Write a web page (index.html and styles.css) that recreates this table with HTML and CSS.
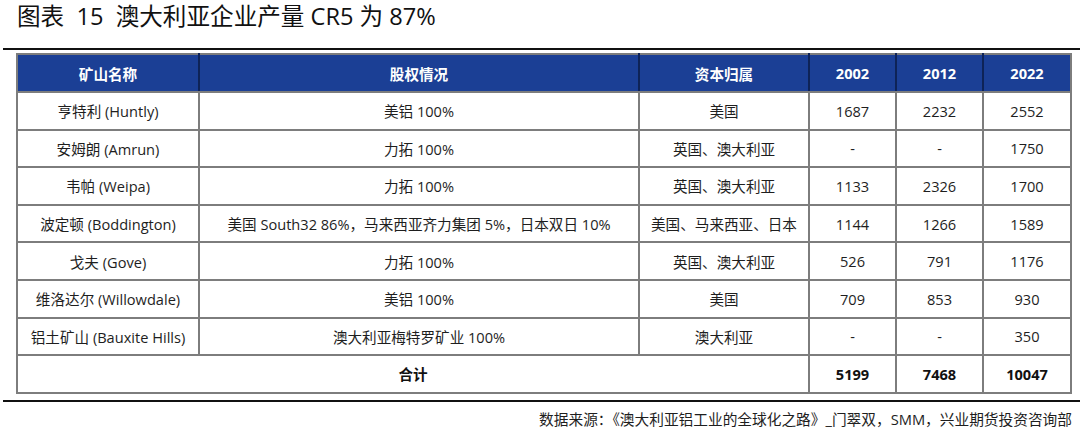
FILE: index.html
```html
<!DOCTYPE html>
<html lang="zh">
<head>
<meta charset="utf-8">
<link rel="stylesheet" href="styles.css">
</head>
<body>
<div class="page">
  <h1 class="title">图表&nbsp; 15&nbsp; 澳大利亚企业产量 CR5 为 87%</h1>
  <div class="rule rule-top"></div>
  <div class="table-wrap">
    <table class="data">
      <colgroup>
        <col class="c1"><col class="c2"><col class="c3"><col class="c4"><col class="c5"><col class="c6">
      </colgroup>
      <thead>
        <tr><th>矿山名称</th><th>股权情况</th><th>资本归属</th><th>2002</th><th>2012</th><th>2022</th></tr>
      </thead>
      <tbody>
        <tr><td>亨特利 (Huntly)</td><td>美铝 100%</td><td>美国</td><td>1687</td><td>2232</td><td>2552</td></tr>
        <tr><td>安姆朗 (Amrun)</td><td>力拓 100%</td><td>英国、澳大利亚</td><td>-</td><td>-</td><td>1750</td></tr>
        <tr><td>韦帕 (Weipa)</td><td>力拓 100%</td><td>英国、澳大利亚</td><td>1133</td><td>2326</td><td>1700</td></tr>
        <tr><td>波定顿 (Boddington)</td><td>美国 South32 86%，马来西亚齐力集团 5%，日本双日 10%</td><td>美国、马来西亚、日本</td><td>1144</td><td>1266</td><td>1589</td></tr>
        <tr><td>戈夫 (Gove)</td><td>力拓 100%</td><td>英国、澳大利亚</td><td>526</td><td>791</td><td>1176</td></tr>
        <tr><td>维洛达尔 (Willowdale)</td><td>美铝 100%</td><td>美国</td><td>709</td><td>853</td><td>930</td></tr>
        <tr><td>铝土矿山 (Bauxite Hills)</td><td>澳大利亚梅特罗矿业 100%</td><td>澳大利亚</td><td>-</td><td>-</td><td>350</td></tr>
        <tr class="total"><td colspan="3">合计</td><td>5199</td><td>7468</td><td>10047</td></tr>
      </tbody>
    </table>
  </div>
  <div class="rule rule-bottom"></div>
  <p class="source">数据来源：《澳大利亚铝工业的全球化之路》_门翠双，SMM，兴业期货投资咨询部</p>
</div>
</body>
</html>
```

FILE: styles.css
```css
html, body {
  margin: 0;
  padding: 0;
  background: #ffffff;
}
body {
  font-family: "Open Sans", "Noto Sans CJK SC", sans-serif;
  color: #1e1e1e;
}
.page {
  width: 1080px;
  height: 439px;
  display: flex;
  flex-direction: column;
}
.title {
  margin: 0;
  padding: 1px 0 0 17px;
  height: 43px;
  box-sizing: border-box;
  font-family: "Open Sans", "Noto Sans CJK SC", sans-serif;
  font-weight: 400;
  font-size: 23.6px;
  line-height: 30px;
  color: #111;
}
.rule {
  height: 2px;
  background: #111;
  margin-left: 3px;
}
.rule-top {
  margin-top: 5px;
}
.table-wrap {
  padding: 3px 0 0 16px;
}
.data {
  border-collapse: collapse;
  table-layout: fixed;
  width: 1054px;
  font-size: 14.6px;
}
.c1 { width: 182px; }
.c2 { width: 440px; }
.c3 { width: 170px; }
.c4 { width: 87px; }
.c5 { width: 87px; }
.c6 { width: 88px; }
.data th {
  background: #1b3f95;
  color: #ffffff;
  font-weight: 700;
  height: 36px;
  padding: 0;
  border: 2px solid #7d7d7d;
  border-left-color: #0e2357;
  border-right-color: #0e2357;
  text-align: center;
}
.data th:first-child { border-left-color: #7d7d7d; }
.data th:last-child { border-right-color: #7d7d7d; }
.data td {
  height: 35.6px;
  padding: 0;
  border: 2px solid #7d7d7d;
  text-align: center;
  white-space: nowrap;
}
.data tr.total td {
  font-weight: 700;
  color: #111;
}
.rule-bottom {
  margin-top: 6px;
}
.source {
  margin: 7px 8px 0 0;
  text-align: right;
  font-size: 14.7px;
  line-height: 20px;
  color: #1e1e1e;
}
```
